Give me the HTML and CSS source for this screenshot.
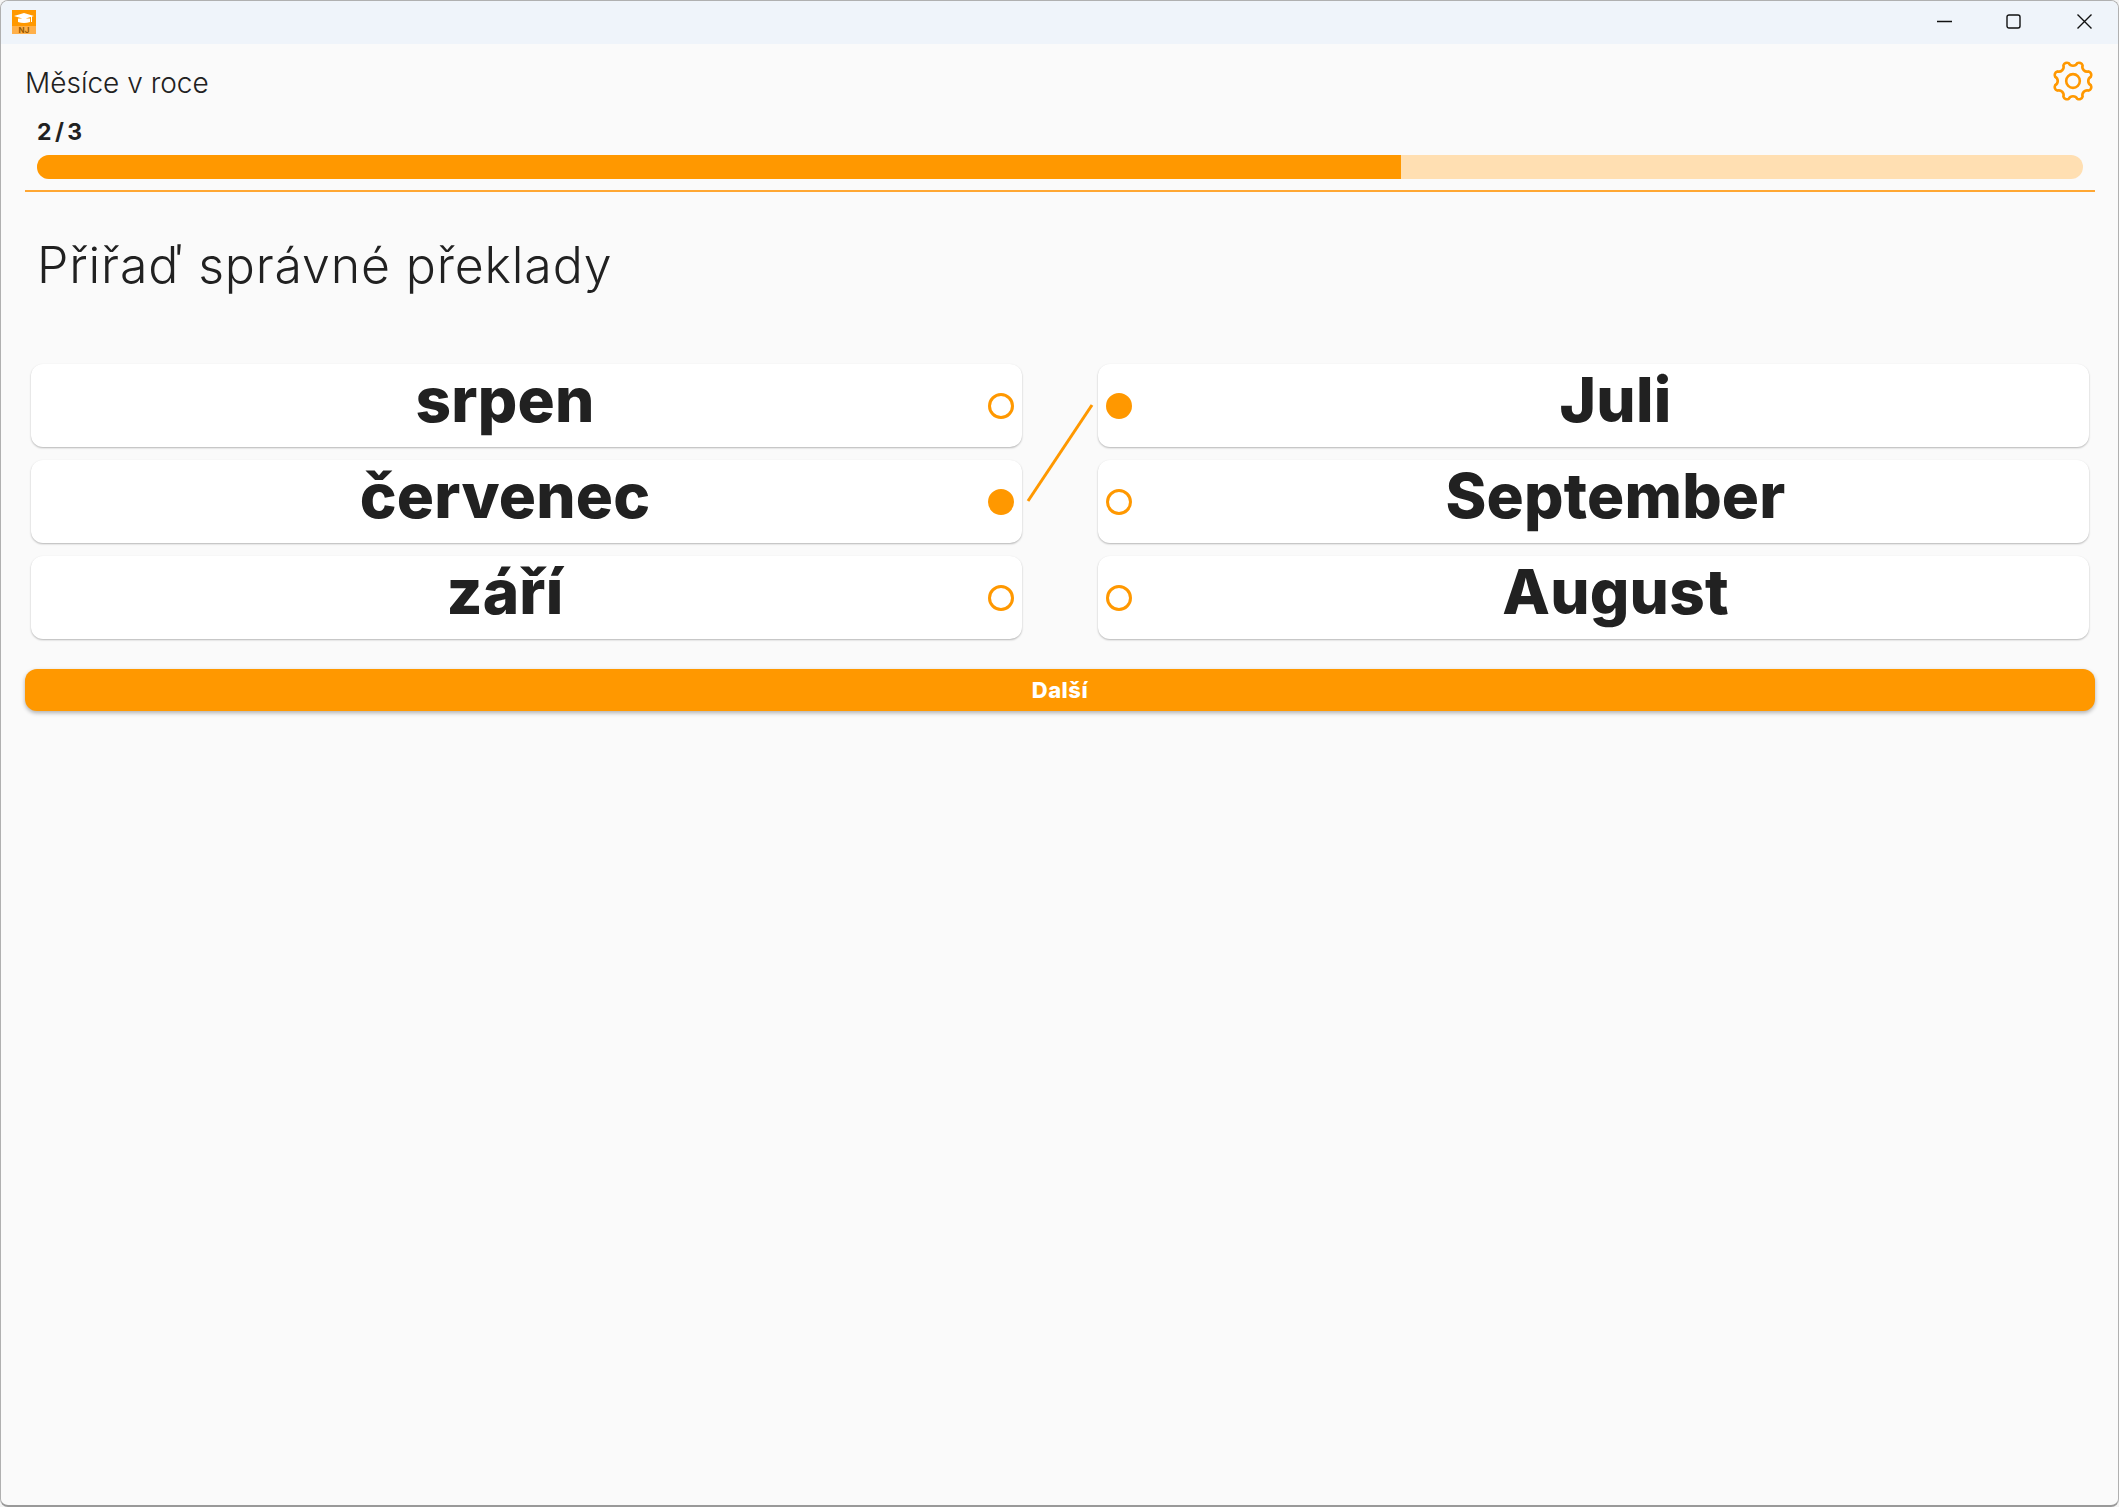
FILE: index.html
```html
<!DOCTYPE html>
<html lang="cs">
<head>
    <meta charset="UTF-8">
    <title>Měsíce v roce</title>
    <link rel="stylesheet" href="styles.css">
</head>
<body>
    <div class="window">
        <div class="titlebar">
            <svg class="app-icon" viewBox="0 0 24 24">
                <rect width="24" height="24" fill="#ff9800"/>
                <rect y="16" width="24" height="8" fill="#ffb04a"/>
                <path d="M2 6 L12 3 L22 6 L12 9 Z M6 8.5 H18 V12 Q12 14 6 12 Z" fill="#fff"/>
                <rect x="19" y="6" width="1" height="6" fill="#fff"/>
                <text x="12" y="23" class="app-icon-text">NJ</text>
            </svg>
            <div class="window-controls">
                <svg class="control control-min" viewBox="0 0 15 15"><path d="M0 7.5H15"/></svg>
                <svg class="control control-max" viewBox="0 0 15 15"><rect x="1" y="1" width="13" height="13" rx="2"/></svg>
                <svg class="control control-close" viewBox="0 0 15 15"><path d="M0.5 0.5L14.5 14.5M14.5 0.5L0.5 14.5"/></svg>
            </div>
        </div>
        <div class="content">
            <div class="header">
                <div class="lesson-name">Měsíce v roce</div>
                <svg class="gear" viewBox="0 0 40 40">
                    <circle cx="20" cy="20" r="6.5"/>
                    <path d="M24.08 2.98A3.6 3.6 0 0 1 29.14 5.08A4.6 4.6 0 0 0 34.92 10.86A3.6 3.6 0 0 1 37.02 15.92A4.6 4.6 0 0 0 37.02 24.08A3.6 3.6 0 0 1 34.92 29.14A4.6 4.6 0 0 0 29.14 34.92A3.6 3.6 0 0 1 24.08 37.02A4.6 4.6 0 0 0 15.92 37.02A3.6 3.6 0 0 1 10.86 34.92A4.6 4.6 0 0 0 5.08 29.14A3.6 3.6 0 0 1 2.98 24.08A4.6 4.6 0 0 0 2.98 15.92A3.6 3.6 0 0 1 5.08 10.86A4.6 4.6 0 0 0 10.86 5.08A3.6 3.6 0 0 1 15.92 2.98A4.6 4.6 0 0 0 24.08 2.98Z"/>
                </svg>
            </div>
            <div class="progress-block">
                <div class="progress-label">2 / 3</div>
                <div class="progress-track"><div class="progress-fill" style="width: 66.67%"></div></div>
            </div>
            <h1 class="task">Přiřaď správné překlady</h1>
            <div class="pairs">
                <div class="card card-left"><span class="word">srpen</span><span class="dot"></span></div>
                <div class="card card-right"><span class="dot dot-on"></span><span class="word">Juli</span></div>
                <div class="card card-left"><span class="word">červenec</span><span class="dot dot-on"></span></div>
                <div class="card card-right"><span class="dot"></span><span class="word">September</span></div>
                <div class="card card-left"><span class="word">září</span><span class="dot"></span></div>
                <div class="card card-right"><span class="dot"></span><span class="word">August</span></div>
                <svg class="link-line" viewBox="0 0 64 96"><path d="M0 96L64 0"/></svg>
            </div>
            <button class="next">Další</button>
        </div>
    </div>
</body>
</html>
```

FILE: styles.css
```css
html, body {
    margin: 0;
    height: 100%;
    background: #f4f4f4;
}
body {
    font-family: 'Inter', 'Liberation Sans', sans-serif;
    color: #212121;
}
.window {
    height: 100%;
    box-sizing: border-box;
    display: flex;
    flex-direction: column;
    border: 1px solid #b0b0b0;
    border-bottom: 2px solid #999;
    border-radius: 8px;
    overflow: hidden;
    background: #fafafa;
}
.titlebar {
    height: 43px;
    flex-shrink: 0;
    display: flex;
    align-items: center;
    justify-content: space-between;
    background: #eff4fa;
}
.app-icon {
    width: 24px;
    height: 24px;
    margin: -2px 0 0 11px;
}
.app-icon-text {
    font-size: 8px;
    font-weight: 700;
    fill: #9a5a00;
    text-anchor: middle;
}
.window-controls {
    display: flex;
    align-items: center;
    gap: 54px;
    margin: -2px 26px 0 0;
}
.control {
    width: 15px;
    height: 15px;
    fill: none;
    stroke: #111;
    stroke-width: 1.4;
}
.control-close {
    margin-left: 2px;
}
.content {
    flex-grow: 1;
    padding: 0 23px 0 24px;
}
.header {
    display: flex;
    justify-content: space-between;
    align-items: center;
    height: 79px;
}
.lesson-name {
    font-size: 28px;
    font-weight: 300;
    margin-top: -2px;
}
.gear {
    width: 42px;
    height: 42px;
    margin: -5px 1px 0 0;
    fill: none;
    stroke: #ff9800;
    stroke-width: 2.5;
}
.progress-block {
    padding: 0 12px 11px;
    border-bottom: 2px solid #ffa733;
}
.progress-label {
    font-size: 23px;
    font-weight: 700;
    line-height: 18px;
    margin-bottom: 14px;
    word-spacing: -2px;
}
.progress-track {
    height: 24px;
    margin-top: 1px;
    border-radius: 12px;
    background: #ffdfb2;
    overflow: hidden;
}
.progress-fill {
    height: 100%;
    background: #ff9800;
}
.task {
    margin: 43px 0 0 12px;
    font-size: 50px;
    font-weight: 300;
    line-height: 60px;
    letter-spacing: 0.85px;
}
.pairs {
    position: relative;
    display: grid;
    grid-template-columns: 991px 991px;
    grid-auto-rows: 83px;
    column-gap: 76px;
    row-gap: 13px;
    margin: 69px 0 0 6px;
}
.card {
    display: flex;
    align-items: center;
    background: #fff;
    border-radius: 12px;
    box-shadow: 0 1px 2px rgba(0, 0, 0, 0.28);
}
.card-left {
    padding-right: 8px;
}
.card-right {
    padding-left: 8px;
}
.word {
    flex-grow: 1;
    text-align: center;
    font-size: 62px;
    font-weight: 800;
    line-height: 70px;
    padding-bottom: 12px;
    letter-spacing: 0.2px;
}
.card-left .word {
    padding-right: 9px;
}
.card-right .word {
    padding-left: 10px;
}
.dot {
    width: 26px;
    height: 26px;
    margin: 1px 0 0;
    flex-shrink: 0;
    box-sizing: border-box;
    border: 3px solid #ff9800;
    border-radius: 50%;
}
.dot-on {
    background: #ff9800;
}
.link-line {
    position: absolute;
    left: 997px;
    top: 41px;
    width: 64px;
    height: 96px;
    overflow: visible;
    fill: none;
    stroke: #ff9800;
    stroke-width: 3;
}
.next {
    display: block;
    width: 100%;
    height: 42px;
    margin-top: 30px;
    padding: 0;
    border: none;
    border-radius: 12px;
    background: #ff9800;
    color: #fff;
    font-family: inherit;
    font-size: 22px;
    font-weight: 800;
    letter-spacing: 0.5px;
    box-shadow: 0 2px 4px rgba(0, 0, 0, 0.3);
}
```
